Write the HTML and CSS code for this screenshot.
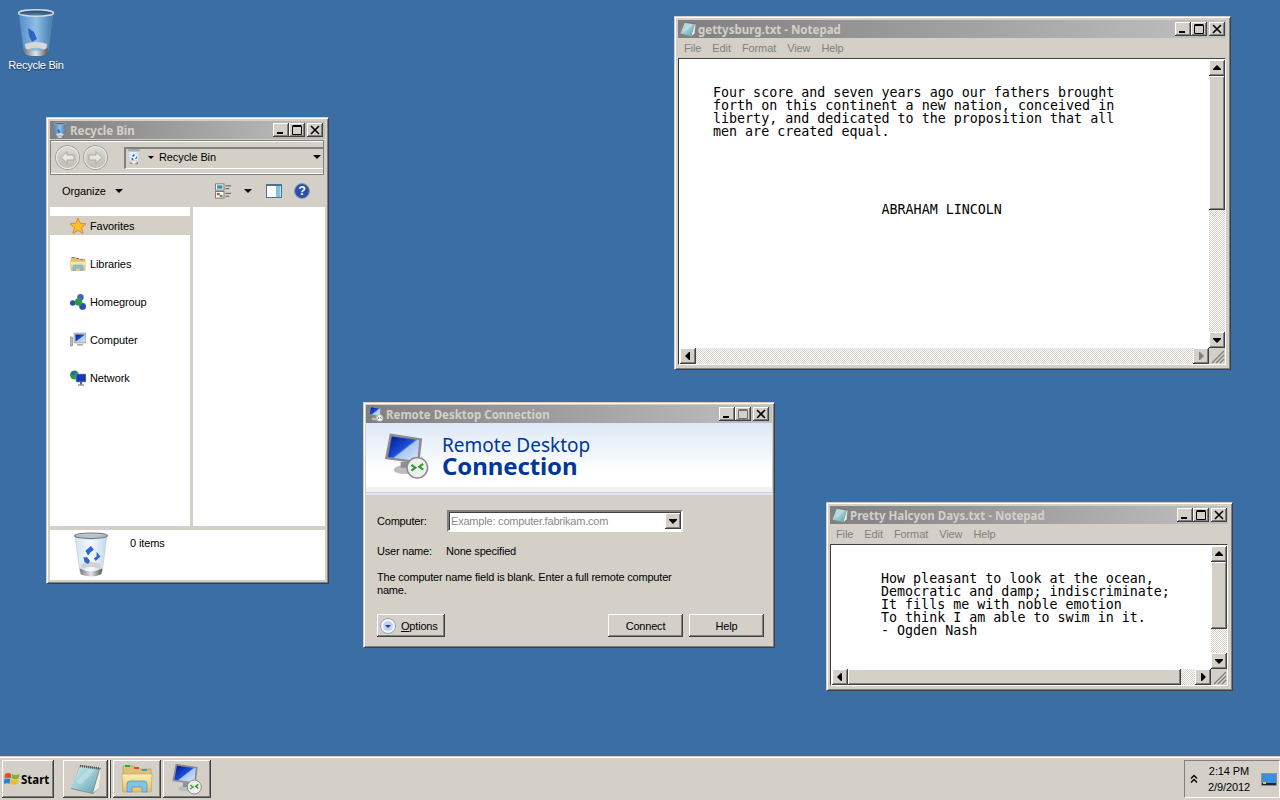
FILE: index.html
```html
<!DOCTYPE html>
<html lang="en">
<head>
    <meta charset="UTF-8">
    <title>Windows Server desktop</title>
    <link rel="stylesheet" href="styles.css">
</head>
<body>

<!-- shared icons -->
<svg class="defs" aria-hidden="true">
    <defs>
        <linearGradient id="gBin" x1="0" x2="1" y1="0" y2="0">
            <stop offset="0" stop-color="#4f8ecb"/><stop offset=".5" stop-color="#8fbfe6"/><stop offset="1" stop-color="#3f78b0"/>
        </linearGradient>
        <linearGradient id="gBinLight" x1="0" x2="1" y1="0" y2="0">
            <stop offset="0" stop-color="#cfe3f3"/><stop offset=".5" stop-color="#f3f9fd"/><stop offset="1" stop-color="#c3d8ea"/>
        </linearGradient>
        <linearGradient id="gBase" x1="0" x2="1" y1="0" y2="0">
            <stop offset="0" stop-color="#777"/><stop offset=".5" stop-color="#e4e4e4"/><stop offset="1" stop-color="#555"/>
        </linearGradient>
        <linearGradient id="gPad" x1="0" x2="1" y1="0" y2="1">
            <stop offset="0" stop-color="#d8eef0"/><stop offset="1" stop-color="#5ea6b8"/>
        </linearGradient>
        <linearGradient id="gFolder" x1="0" x2="0" y1="0" y2="1">
            <stop offset="0" stop-color="#fdf0b4"/><stop offset="1" stop-color="#e9bf62"/>
        </linearGradient>
        <linearGradient id="gScreen" x1="0" x2="1" y1="0" y2="1">
            <stop offset="0" stop-color="#00158f"/><stop offset=".5" stop-color="#1c4fd8"/><stop offset=".55" stop-color="#a9c6f2"/><stop offset="1" stop-color="#dbe8fa"/>
        </linearGradient>
    </defs>
    <symbol id="i-bin" viewBox="0 0 38 48">
        <path d="M2 5 L7 43 Q19 49 31 43 L36 5 Z" fill="url(#gBin)" stroke="#6f8fa8" stroke-width=".6"/>
        <path d="M9 43 Q19 36 29 43 L30 36 Q19 32 8 36 Z" fill="#d8d8d8"/>
        <path d="M7 40 Q19 46 31 40 L30 46 Q19 51 8 46 Z" fill="url(#gBase)"/>
        <path d="M11 20 L17 24 L20 31 L15 34 L12 28 Z" fill="#2f63c4"/>
        <ellipse cx="19" cy="5" rx="17.5" ry="3.2" fill="#24405a" fill-opacity=".55" stroke="#d5dade" stroke-width="1.4"/>
    </symbol>
    <symbol id="i-bin-light" viewBox="0 0 38 48">
        <path d="M2 4 L7 42 Q19 48 31 42 L36 4 Z" fill="url(#gBinLight)" stroke="#b5c4cf" stroke-width=".6"/>
        <path d="M9 40 Q19 34 29 40 L30 34 Q19 30 8 34 Z" fill="#d2d2d2"/>
        <path d="M7 39 Q19 45 31 39 L30 45 Q19 50 8 45 Z" fill="url(#gBase)"/>
        <path d="M13 20 L19 15 L22 19 L18 22 L16 25 Z M25 21 L29 26 L24 31 L22 28 L25 26 Z M11 27 L15 27 L18 31 L16 34 L12 32 Z" fill="#2a66cf"/>
        <ellipse cx="19" cy="4" rx="17.5" ry="3" fill="#8a98a3" fill-opacity=".5" stroke="#777" stroke-width="1.2"/>
    </symbol>
    <symbol id="i-pad" viewBox="0 0 32 32">
        <path d="M10 2 L31 5 L29 25 L23 31 L1 26 Z" fill="#8a8a84"/>
        <path d="M23 30 L30 6 L31 7 L29 25 Z" fill="#f2f0e4"/>
        <path d="M10 3 L29 6 L22 30 L1 25 Z" fill="url(#gPad)"/>
        <path d="M6 19 L19 6 L25 7 L11 22 Z" fill="#fff" fill-opacity=".28"/>
        <path d="M10 3 L30 5.6" stroke="#55554f" stroke-width="2.4" stroke-dasharray="1 1"/>
    </symbol>
    <symbol id="i-folder" viewBox="0 0 32 32">
        <path d="M2 3 H13 L15 6 H30 V28 H2 Z" fill="#e0c078" stroke="#b3924e" stroke-width=".6"/>
        <rect x="4" y="2" width="5" height="2" fill="#3aa63a"/>
        <rect x="13" y="4" width="5" height="2" fill="#d84a3a"/>
        <rect x="21" y="6" width="5" height="2" fill="#3a9ad8"/>
        <path d="M1 11 H31 L30 29 H2 Z" fill="url(#gFolder)" stroke="#c49f52" stroke-width=".6"/>
        <path d="M6 29 V21 Q6 18 9 18 H23 Q26 18 26 21 V29 H21 V24 H11 V29 Z" fill="#7fc4ea" stroke="#4a8fc0" stroke-width=".7"/>
    </symbol>
    <symbol id="i-monitor" viewBox="0 0 48 48">
        <ellipse cx="22" cy="38" rx="11" ry="4.5" fill="#bdbdbd"/>
        <rect x="18" y="30" width="8" height="6" fill="#8f8f8f"/>
        <path d="M7 1 L40 6 L37 32 L2 27 Z" fill="#8d8d8d"/>
        <path d="M9 4 L37 8 L35 29 L5 25 Z" fill="url(#gScreen)"/>
        <circle cx="35" cy="36" r="10.5" fill="#efefef" stroke="#8c8c8c" stroke-width="1.5"/>
        <path d="M29 33 L33 36 L29 39 M41 32 L37 35 L41 38" fill="none" stroke="#2f9a2f" stroke-width="2.2"/>
    </symbol>
    <symbol id="i-back" viewBox="0 0 25 25"><path d="M6 12.5 L12 6.5 V10 H19 V15 H12 V18.5 Z" fill="#e8e6e0" stroke="#a9a6a0"/></symbol>
    <symbol id="i-forward" viewBox="0 0 25 25"><path d="M19 12.5 L13 6.5 V10 H6 V15 H13 V18.5 Z" fill="#e8e6e0" stroke="#a9a6a0"/></symbol>
    <symbol id="i-min" viewBox="0 0 16 14"><rect x="4" y="9" width="6" height="2" fill="#000"/></symbol>
    <symbol id="i-max" viewBox="0 0 16 14"><path d="M3.5 3.5 H12.5 V11.5 H3.5 Z M3.5 2.5 H12.5" fill="none" stroke="#000"/></symbol>
    <symbol id="i-close" viewBox="0 0 16 14"><path d="M4 3 L12 11 M12 3 L4 11" stroke="#000" stroke-width="1.6"/></symbol>
    <symbol id="i-up" viewBox="0 0 16 16"><path d="M8 5 L12 9 V10 H4 V9 Z" fill="#000"/></symbol>
    <symbol id="i-down" viewBox="0 0 16 16"><path d="M4 6 H12 V7 L8 11 L4 7 Z" fill="#000"/></symbol>
    <symbol id="i-left" viewBox="0 0 16 16"><path d="M10 4 V12 H9 L5 8 L9 4 Z" fill="#000"/></symbol>
    <symbol id="i-right" viewBox="0 0 16 16"><path d="M6 4 V12 H7 L11 8 L7 4 Z" fill="#000"/></symbol>
    <symbol id="i-right-off" viewBox="0 0 16 16"><path d="M6 4 V12 H7 L11 8 L7 4 Z" fill="#808080"/></symbol>
    <symbol id="i-grip" viewBox="0 0 16 16"><path d="M15 3 L3 15 M15 7 L7 15 M15 11 L11 15" stroke="#808080" stroke-width="1.4"/></symbol>
</svg>

<div class="desktop">

    <div class="desk-icon">
        <svg class="desk-bin"><use href="#i-bin"/></svg>
        <span>Recycle Bin</span>
    </div>

    <!-- explorer -->
    <div class="win win-explorer">
        <div class="titlebar">
            <svg class="title-icon"><use href="#i-bin"/></svg>
            <span class="title-text">Recycle Bin</span>
            <div class="caption-btns">
                <button class="cap"><svg><use href="#i-min"/></svg></button>
                <button class="cap"><svg><use href="#i-max"/></svg></button>
                <button class="cap cap-close"><svg><use href="#i-close"/></svg></button>
            </div>
        </div>
        <div class="addressbar">
            <div class="nav-btns">
                <span class="nav-orb"><svg><use href="#i-back"/></svg></span>
                <span class="nav-orb"><svg><use href="#i-forward"/></svg></span>
            </div>
            <div class="crumb">
                <svg class="crumb-icon"><use href="#i-bin-light"/></svg>
                <span class="tri tri-small"></span>
                <span class="crumb-text">Recycle Bin</span>
                <span class="tri tri-end"></span>
            </div>
        </div>
        <div class="toolbar">
            <span>Organize</span>
            <span class="tri tri-org"></span>
            <div class="toolbar-right">
                <svg class="tool-views" viewBox="0 0 18 16">
                    <rect x=".5" y=".5" width="9" height="6.5" fill="#fff" stroke="#777"/>
                    <rect x="2" y="2" width="6" height="3.5" fill="#3d8f9c"/>
                    <rect x=".5" y="8.5" width="9" height="7" fill="#fff" stroke="#777"/>
                    <rect x="2" y="10" width="3" height="2.5" fill="#c43"/>
                    <rect x="5" y="12" width="3" height="2.5" fill="#3a3"/>
                    <path d="M11 2.5 H17 M11 5.5 H15 M11 10.5 H17 M11 13.5 H15" stroke="#555"/>
                </svg>
                <span class="tri"></span>
                <svg class="tool-pane" viewBox="0 0 16 14">
                    <rect x=".5" y=".5" width="15" height="13" fill="#fff" stroke="#4d7392"/>
                    <rect x="10" y="2" width="4.5" height="11" fill="#7cc3dc"/>
                    <path d="M1 1.5 H15" stroke="#4d7392"/>
                </svg>
                <svg class="tool-help" viewBox="0 0 16 16">
                    <circle cx="8" cy="8" r="7.5" fill="#2d4fa8" stroke="#8b9fb8"/>
                    <text x="8" y="12" text-anchor="middle" class="help-mark">?</text>
                </svg>
            </div>
        </div>
        <div class="panes">
            <ul class="nav-pane">
                <li class="nav-item nav-selected">
                    <svg class="nav-icon" viewBox="0 0 16 16"><path d="M8 0 L10.2 5.2 L16 5.8 L11.6 9.6 L13 15.5 L8 12.4 L3 15.5 L4.4 9.6 L0 5.8 L5.8 5.2 Z" fill="#fbc02d" stroke="#e0752a" stroke-width=".8"/></svg>
                    Favorites
                </li>
                <li class="nav-item">
                    <svg class="nav-icon"><use href="#i-folder"/></svg>
                    Libraries
                </li>
                <li class="nav-item">
                    <svg class="nav-icon" viewBox="0 0 16 16">
                        <circle cx="2.8" cy="9" r="2.8" fill="#2b4fb0"/>
                        <circle cx="10.5" cy="3.2" r="3.2" fill="#3d63c8"/>
                        <circle cx="12.6" cy="12.4" r="3.4" fill="#2b4fb0"/>
                        <circle cx="8.6" cy="8" r="3.8" fill="#2f9a3a"/>
                    </svg>
                    Homegroup
                </li>
                <li class="nav-item">
                    <svg class="nav-icon" viewBox="0 0 16 16">
                        <rect x="0" y="5" width="2.6" height="9" fill="#b8b8b8" stroke="#777" stroke-width=".5"/>
                        <rect x="4" y="1" width="12" height="10" fill="#c8c8c8" stroke="#888" stroke-width=".5"/>
                        <rect x="5.5" y="2.5" width="9" height="7" fill="url(#gScreen)"/>
                        <rect x="7" y="12" width="6" height="1.6" fill="#aaa"/>
                    </svg>
                    Computer
                </li>
                <li class="nav-item">
                    <svg class="nav-icon" viewBox="0 0 16 16">
                        <circle cx="4.5" cy="5" r="4.5" fill="#2f9a3a"/>
                        <path d="M1 3 Q4 0 6 2 Q7 5 4 5 Q2 6 1 3" fill="#2b5ec8"/>
                        <rect x="6" y="4" width="10" height="8" fill="#1438c0" stroke="#9aa" stroke-width=".6"/>
                        <rect x="10" y="12" width="2" height="2.5" fill="#666"/>
                        <rect x="8" y="14.5" width="6" height="1" fill="#666"/>
                    </svg>
                    Network
                </li>
            </ul>
            <div class="file-pane"></div>
        </div>
        <div class="statusbar">
            <svg class="status-bin"><use href="#i-bin-light"/></svg>
            <span class="status-count">0 items</span>
        </div>
    </div>

    <!-- notepad 1 -->
    <div class="win win-gettysburg">
        <div class="titlebar">
            <svg class="title-icon"><use href="#i-pad"/></svg>
            <span class="title-text">gettysburg.txt - Notepad</span>
            <div class="caption-btns">
                <button class="cap"><svg><use href="#i-min"/></svg></button>
                <button class="cap"><svg><use href="#i-max"/></svg></button>
                <button class="cap cap-close"><svg><use href="#i-close"/></svg></button>
            </div>
        </div>
        <div class="menubar">
            <span>File</span><span>Edit</span><span>Format</span><span>View</span><span>Help</span>
        </div>
        <div class="client">
            <div class="client-top">
                <pre class="doc doc-gettysburg">Four score and seven years ago our fathers brought
forth on this continent a new nation, conceived in
liberty, and dedicated to the proposition that all
men are created equal.





                     ABRAHAM LINCOLN</pre>
                <div class="vscroll">
                    <span class="sb-btn"><svg><use href="#i-up"/></svg></span>
                    <span class="sb-thumb thumb-v1"></span>
                    <span class="sb-track"></span>
                    <span class="sb-btn"><svg><use href="#i-down"/></svg></span>
                </div>
            </div>
            <div class="hscroll">
                <span class="sb-btn"><svg><use href="#i-left"/></svg></span>
                <span class="sb-track"></span>
                <span class="sb-btn"><svg><use href="#i-right-off"/></svg></span>
                <span class="sb-grip"><svg><use href="#i-grip"/></svg></span>
            </div>
        </div>
    </div>

    <!-- notepad 2 -->
    <div class="win win-halcyon">
        <div class="titlebar">
            <svg class="title-icon"><use href="#i-pad"/></svg>
            <span class="title-text">Pretty Halcyon Days.txt - Notepad</span>
            <div class="caption-btns">
                <button class="cap"><svg><use href="#i-min"/></svg></button>
                <button class="cap"><svg><use href="#i-max"/></svg></button>
                <button class="cap cap-close"><svg><use href="#i-close"/></svg></button>
            </div>
        </div>
        <div class="menubar">
            <span>File</span><span>Edit</span><span>Format</span><span>View</span><span>Help</span>
        </div>
        <div class="client">
            <div class="client-top">
                <pre class="doc doc-halcyon">How pleasant to look at the ocean,
Democratic and damp; indiscriminate;
It fills me with noble emotion
To think I am able to swim in it.
- Ogden Nash</pre>
                <div class="vscroll">
                    <span class="sb-btn"><svg><use href="#i-up"/></svg></span>
                    <span class="sb-thumb thumb-v2"></span>
                    <span class="sb-track"></span>
                    <span class="sb-btn"><svg><use href="#i-down"/></svg></span>
                </div>
            </div>
            <div class="hscroll">
                <span class="sb-btn"><svg><use href="#i-left"/></svg></span>
                <span class="sb-thumb thumb-h2"></span>
                <span class="sb-track"></span>
                <span class="sb-btn"><svg><use href="#i-right"/></svg></span>
                <span class="sb-grip"><svg><use href="#i-grip"/></svg></span>
            </div>
        </div>
    </div>

    <!-- remote desktop -->
    <div class="win win-rdc">
        <div class="titlebar">
            <svg class="title-icon"><use href="#i-monitor"/></svg>
            <span class="title-text">Remote Desktop Connection</span>
            <div class="caption-btns">
                <button class="cap"><svg><use href="#i-min"/></svg></button>
                <button class="cap cap-off"><svg><use href="#i-max"/></svg></button>
                <button class="cap cap-close"><svg><use href="#i-close"/></svg></button>
            </div>
        </div>
        <div class="rdc-banner">
            <svg class="rdc-logo"><use href="#i-monitor"/></svg>
            <div class="rdc-heading">
                <div class="rdc-line1">Remote Desktop</div>
                <div class="rdc-line2">Connection</div>
            </div>
        </div>
        <div class="rdc-body">
            <div class="rdc-row">
                <label class="rdc-label">Computer:</label>
                <div class="combo">
                    <span class="combo-text">Example: computer.fabrikam.com</span>
                    <span class="combo-btn"><svg><use href="#i-down"/></svg></span>
                </div>
            </div>
            <div class="rdc-row rdc-user">
                <span class="rdc-label rdc-label-user">User name:</span>
                <span>None specified</span>
            </div>
            <p class="rdc-note">The computer name field is blank. Enter a full remote computer name.</p>
            <div class="rdc-actions">
                <button class="btn btn-options">
                    <svg class="options-orb" viewBox="0 0 16 16">
                        <circle cx="8" cy="8" r="7.5" fill="#f4f6fb" stroke="#8fa3c4"/>
                        <circle cx="8" cy="8" r="5" fill="#c3d2ee"/>
                        <path d="M5 7 H11 L8 10 Z" fill="#1f3f8f"/>
                    </svg>
                    <span><u>O</u>ptions</span>
                </button>
                <button class="btn btn-main btn-connect">Connect</button>
                <button class="btn btn-main">Help</button>
            </div>
        </div>
    </div>

</div>

<div class="taskbar">
    <button class="start">
        <svg class="start-flag" viewBox="0 0 16 16">
            <path d="M1 3 Q4 1 7.4 3 L6.6 7.4 Q4 6 .4 7.4 Z" fill="#d8542e"/>
            <path d="M8.2 3.2 Q11.5 5 15.5 2.8 L14.6 7.4 Q11 9 7.4 7.6 Z" fill="#7db32e"/>
            <path d="M.3 8.2 Q4 7 6.4 8.2 L5.6 12.8 Q3 11.6 -.4 12.8 Z" fill="#2d7fd0"/>
            <path d="M7.2 8.4 Q11 9.8 14.4 8.2 L13.6 12.8 Q10 14.4 6.4 13 Z" fill="#f0bb2a"/>
        </svg>
        Start
    </button>
    <div class="task-items">
        <div class="task-group">
            <button class="task-btn task-pad"><svg><use href="#i-pad"/></svg></button>
            <span class="task-stack"></span>
        </div>
        <button class="task-btn"><svg><use href="#i-folder"/></svg></button>
        <button class="task-btn"><svg><use href="#i-monitor"/></svg></button>
    </div>
    <div class="tray">
        <svg class="tray-chevron" viewBox="0 0 8 10"><path d="M1 4.5 L4 1.5 L7 4.5 M1 8.5 L4 5.5 L7 8.5" fill="none" stroke="#000" stroke-width="1.4"/></svg>
        <div class="clock"><div>2:14 PM</div><div>2/9/2012</div></div>
        <svg class="tray-monitor" viewBox="0 0 16 13">
            <rect width="16" height="13" fill="#8a9199"/>
            <rect x="1" y="1" width="14" height="9" fill="#3b8fdc"/>
            <rect x="1" y="10" width="14" height="2" fill="#222"/>
            <rect x="2" y="9" width="3" height="2" fill="#f0c030"/>
        </svg>
    </div>
</div>

</body>
</html>
```

FILE: styles.css
```css
* {
    box-sizing: border-box;
}
body {
    margin: 0;
    width: 1280px;
    height: 800px;
    overflow: hidden;
    display: flex;
    flex-direction: column;
    font-family: "Liberation Sans", sans-serif;
    font-size: 11px;
    letter-spacing: -0.1px;
    color: #000;
    background-color: #3a6ea5;
}
button {
    font: inherit;
    letter-spacing: inherit;
    color: inherit;
    padding: 0;
    border: none;
    background: none;
}
ul {
    margin: 0;
    padding: 0;
    list-style: none;
}
.defs {
    position: absolute;
    width: 0;
    height: 0;
}
.desktop {
    position: relative;
    flex: 1;
}

/* desktop icon */
.desk-icon {
    position: absolute;
    left: 0;
    top: 8px;
    width: 72px;
    display: flex;
    flex-direction: column;
    align-items: center;
    color: #fff;
    letter-spacing: -0.25px;
    text-shadow: 0 1px 1px rgba(0, 0, 0, 0.5);
}
.desk-bin {
    width: 38px;
    height: 48px;
    margin-bottom: 3px;
}

/* windows */
.win {
    position: absolute;
    display: flex;
    flex-direction: column;
    padding: 3px 4px 4px 3px;
    background-color: #d4d0c8;
    border: 1px solid;
    border-color: #d4d0c8 #404040 #404040 #d4d0c8;
    box-shadow: inset 1px 1px #fff, inset -1px -1px #808080;
}
.win-explorer {
    left: 46px;
    top: 117px;
    width: 283px;
    height: 467px;
    padding: 3px 3px 3px 3px;
}
.win-explorer .caption-btns {
    margin-right: 1px;
}
.win-gettysburg {
    left: 674px;
    top: 16px;
    width: 557px;
    height: 354px;
}
.win-halcyon {
    left: 826px;
    top: 502px;
    width: 407px;
    height: 189px;
}
.win-rdc {
    left: 363px;
    top: 402px;
    width: 412px;
    height: 246px;
    padding: 2px 2px 3px 2px;
}
.win-rdc .caption-btns {
    margin-right: 2px;
}
.titlebar {
    flex: none;
    height: 18px;
    display: flex;
    align-items: center;
    padding: 0 1px 0 2px;
    background: linear-gradient(to right, #808080, #c0c0c0);
    font-family: "Noto Sans", sans-serif;
    font-size: 11.5px;
    letter-spacing: 0;
}
.title-icon {
    width: 16px;
    height: 16px;
    margin-right: 2px;
}
.title-text {
    font-weight: 700;
    color: #d4d0c8;
}
.caption-btns {
    margin-left: auto;
    display: flex;
}
.cap {
    width: 16px;
    height: 14px;
    background-color: #d4d0c8;
    box-shadow: inset -1px -1px #404040, inset 1px 1px #fff, inset -2px -2px #808080;
}
.cap svg {
    display: block;
    width: 16px;
    height: 14px;
}
.cap-close {
    margin-left: 2px;
}
.cap-off svg {
    opacity: 0.45;
}

/* notepad */
.menubar {
    flex: none;
    height: 20px;
    display: flex;
    align-items: center;
    gap: 11px;
    padding-left: 6px;
    color: #808080;
}
.client {
    flex: 1;
    min-height: 0;
    display: flex;
    flex-direction: column;
    background: #fff;
    border: 1px solid;
    border-color: #404040 #fff #fff #404040;
    padding: 1px 0 0 1px;
}
.client-top {
    flex: 1;
    min-height: 0;
    display: flex;
}
.doc {
    flex: 1;
    margin: 0;
    font-family: "DejaVu Sans Mono", monospace;
    font-size: 13.33px;
    line-height: 13px;
    letter-spacing: 0;
    color: #000;
}
.doc-gettysburg {
    padding: 26px 0 0 33px;
}
.doc-halcyon {
    padding: 26px 0 0 49px;
}
.vscroll {
    flex: none;
    width: 16px;
    display: flex;
    flex-direction: column;
}
.hscroll {
    flex: none;
    height: 16px;
    display: flex;
}
.sb-btn {
    flex: none;
    width: 16px;
    height: 16px;
    background-color: #d4d0c8;
    box-shadow: inset -1px -1px #404040, inset 1px 1px #fff, inset -2px -2px #808080;
}
.sb-btn svg,
.sb-grip svg {
    display: block;
    width: 16px;
    height: 16px;
}
.sb-track {
    flex: 1;
    background: repeating-conic-gradient(#fff 0 25%, #d4d0c8 0 50%) 0 0 / 2px 2px;
}
.sb-thumb {
    flex: none;
    background-color: #d4d0c8;
    box-shadow: inset -1px -1px #404040, inset 1px 1px #fff, inset -2px -2px #808080;
}
.sb-grip {
    flex: none;
    width: 16px;
    height: 16px;
    background-color: #d4d0c8;
}
.thumb-v1 {
    height: 134px;
}
.thumb-v2 {
    height: 67px;
}
.thumb-h2 {
    width: 333px;
}

/* explorer */
.addressbar {
    flex: none;
    height: 35px;
    margin: 1px 1px 0 0;
    display: flex;
    align-items: center;
    padding: 0 0 0 4px;
    border: 1px solid #808080;
    box-shadow: inset 0 1px #fff, inset 0 -1px #fff;
}
.nav-btns {
    display: flex;
    gap: 3px;
    width: 69px;
}
.nav-orb {
    width: 25px;
    height: 25px;
    border-radius: 50%;
    background: linear-gradient(#dedcd6, #bdbab2);
    box-shadow: inset 0 0 0 1px #9f9c95, inset 0 0 0 2px #ecebe6;
}
.nav-orb svg {
    display: block;
    width: 25px;
    height: 25px;
}
.crumb {
    flex: 1;
    height: 22px;
    display: flex;
    align-items: center;
    padding-bottom: 2px;
    border-top: 2px solid #808080;
    border-left: 2px solid #808080;
    border-bottom: 1px solid #fff;
}
.crumb-icon {
    width: 14px;
    height: 16px;
    margin: 0 7px 0 1px;
}
.crumb-text {
    margin-left: 5px;
}
.tri {
    width: 0;
    height: 0;
    border: 4px solid transparent;
    border-top: 4px solid #000;
    border-bottom: none;
}
.tri-small {
    border-width: 3px 3px 0;
}
.tri-end {
    margin-left: auto;
    margin-right: 2px;
}
.toolbar {
    flex: none;
    height: 32px;
    display: flex;
    align-items: center;
    padding-left: 12px;
}
.tri-org {
    margin-left: 9px;
}
.toolbar-right {
    margin-left: auto;
    display: flex;
    align-items: center;
    margin-right: 15px;
}
.tool-views {
    width: 17px;
    height: 16px;
    margin-right: 12px;
}
.tool-pane {
    width: 16px;
    height: 14px;
    margin: 0 12px 0 14px;
}
.tool-help {
    width: 16px;
    height: 16px;
}
.help-mark {
    font-size: 12px;
    font-weight: 700;
    fill: #fff;
}
.panes {
    flex: 1;
    min-height: 0;
    display: flex;
    gap: 3px;
}
.nav-pane {
    width: 140px;
    background: #fff;
    padding-top: 9px;
    display: flex;
    flex-direction: column;
    gap: 19px;
}
.file-pane {
    flex: 1;
    background: #fff;
}
.nav-item {
    height: 19px;
    display: flex;
    align-items: center;
    padding-left: 20px;
}
.nav-selected {
    background-color: #d4d0c8;
}
.nav-icon {
    width: 16px;
    height: 16px;
    margin-right: 4px;
}
.statusbar {
    flex: none;
    height: 50px;
    margin-top: 4px;
    background: #fff;
    display: flex;
    align-items: flex-start;
    padding: 2px 0 0 23px;
}
.status-bin {
    width: 36px;
    height: 45px;
    margin-right: 21px;
}
.status-count {
    margin-top: 5px;
}

/* remote desktop */
.rdc-banner {
    flex: none;
    height: 73px;
    display: flex;
    padding: 9px 0 0 17px;
    background: linear-gradient(#dce8f5, #fff 70%);
    border-bottom: 4px double #d4d0c8;
    box-shadow: inset 0 -5px #f2f2f2;
}
.rdc-logo {
    width: 47px;
    height: 48px;
    margin-right: 12px;
}
.rdc-heading {
    color: #00379c;
    font-family: "Noto Sans", sans-serif;
    letter-spacing: 0;
    padding-top: 2px;
}
.rdc-line1 {
    font-size: 19px;
    line-height: 22px;
}
.rdc-line2 {
    font-size: 24px;
    line-height: 19px;
    font-weight: 700;
    letter-spacing: -0.1px;
}
.rdc-body {
    flex: 1;
    display: flex;
    flex-direction: column;
    padding: 14px 8px 0 11px;
    letter-spacing: -0.2px;
}
.rdc-row {
    display: flex;
    align-items: center;
}
.rdc-label {
    width: 70px;
}
.rdc-label-user {
    width: 69px;
}
.combo {
    width: 236px;
    height: 22px;
    display: flex;
    align-items: center;
    background: #fff;
    border: 2px solid;
    border-color: #808080 #fff #fff #808080;
    box-shadow: inset 1px 1px #404040;
    padding: 0 0 0 2px;
}
.combo-text {
    flex: 1;
    color: #8a8a8a;
}
.combo-btn {
    width: 16px;
    height: 16px;
    background-color: #d4d0c8;
    box-shadow: inset -1px -1px #404040, inset 1px 1px #fff, inset -2px -2px #808080;
}
.combo-btn svg {
    display: block;
    width: 16px;
    height: 16px;
}
.rdc-user {
    margin-top: 13px;
}
.rdc-note {
    margin: 14px 0 0;
    width: 300px;
    line-height: 13px;
}
.rdc-actions {
    margin-top: auto;
    margin-bottom: 7px;
    display: flex;
}
.btn {
    height: 23px;
    background-color: #d4d0c8;
    box-shadow: inset -1px -1px #404040, inset 1px 1px #fff, inset -2px -2px #808080;
}
.btn-options {
    width: 68px;
    display: flex;
    align-items: center;
    gap: 5px;
    padding-left: 3px;
}
.options-orb {
    width: 16px;
    height: 16px;
}
.btn-main {
    width: 75px;
    margin-left: 6px;
}
.btn-connect {
    margin-left: auto;
}

/* taskbar */
.taskbar {
    flex: none;
    height: 44px;
    display: flex;
    align-items: center;
    padding: 2px 0 0 2px;
    background-color: #d4d0c8;
    box-shadow: inset 0 1px #d4d0c8, inset 0 2px #fff;
}
.start {
    width: 52px;
    height: 38px;
    display: flex;
    align-items: center;
    gap: 1px;
    padding-left: 2px;
    font-family: "Noto Sans", sans-serif;
    font-size: 11.5px;
    font-weight: 700;
    letter-spacing: 0;
    box-shadow: inset -1px -1px #404040, inset 1px 1px #fff, inset -2px -2px #808080;
}
.start-flag {
    width: 16px;
    height: 16px;
}
.task-items {
    display: flex;
    margin-left: 9px;
    gap: 2px;
}
.task-group {
    display: flex;
    gap: 1px;
}
.task-btn {
    width: 48px;
    height: 38px;
    display: flex;
    align-items: center;
    justify-content: center;
    box-shadow: inset -1px -1px #404040, inset 1px 1px #fff, inset -2px -2px #808080;
}
.task-btn svg {
    width: 32px;
    height: 32px;
}
.task-pad {
    width: 45px;
}
.task-stack {
    width: 2px;
    height: 38px;
    background-color: #d4d0c8;
    box-shadow: inset -1px 0 #404040, inset 1px 0 #fff;
}
.tray {
    margin-left: auto;
    width: 96px;
    height: 38px;
    display: flex;
    align-items: center;
    padding-left: 5px;
    border: 1px solid;
    border-color: #808080 #fff #fff #808080;
}
.tray-chevron {
    width: 8px;
    height: 10px;
}
.clock {
    width: 62px;
    line-height: 16px;
    text-align: center;
}
.tray-monitor {
    width: 16px;
    height: 13px;
    margin-left: 1px;
}
```
